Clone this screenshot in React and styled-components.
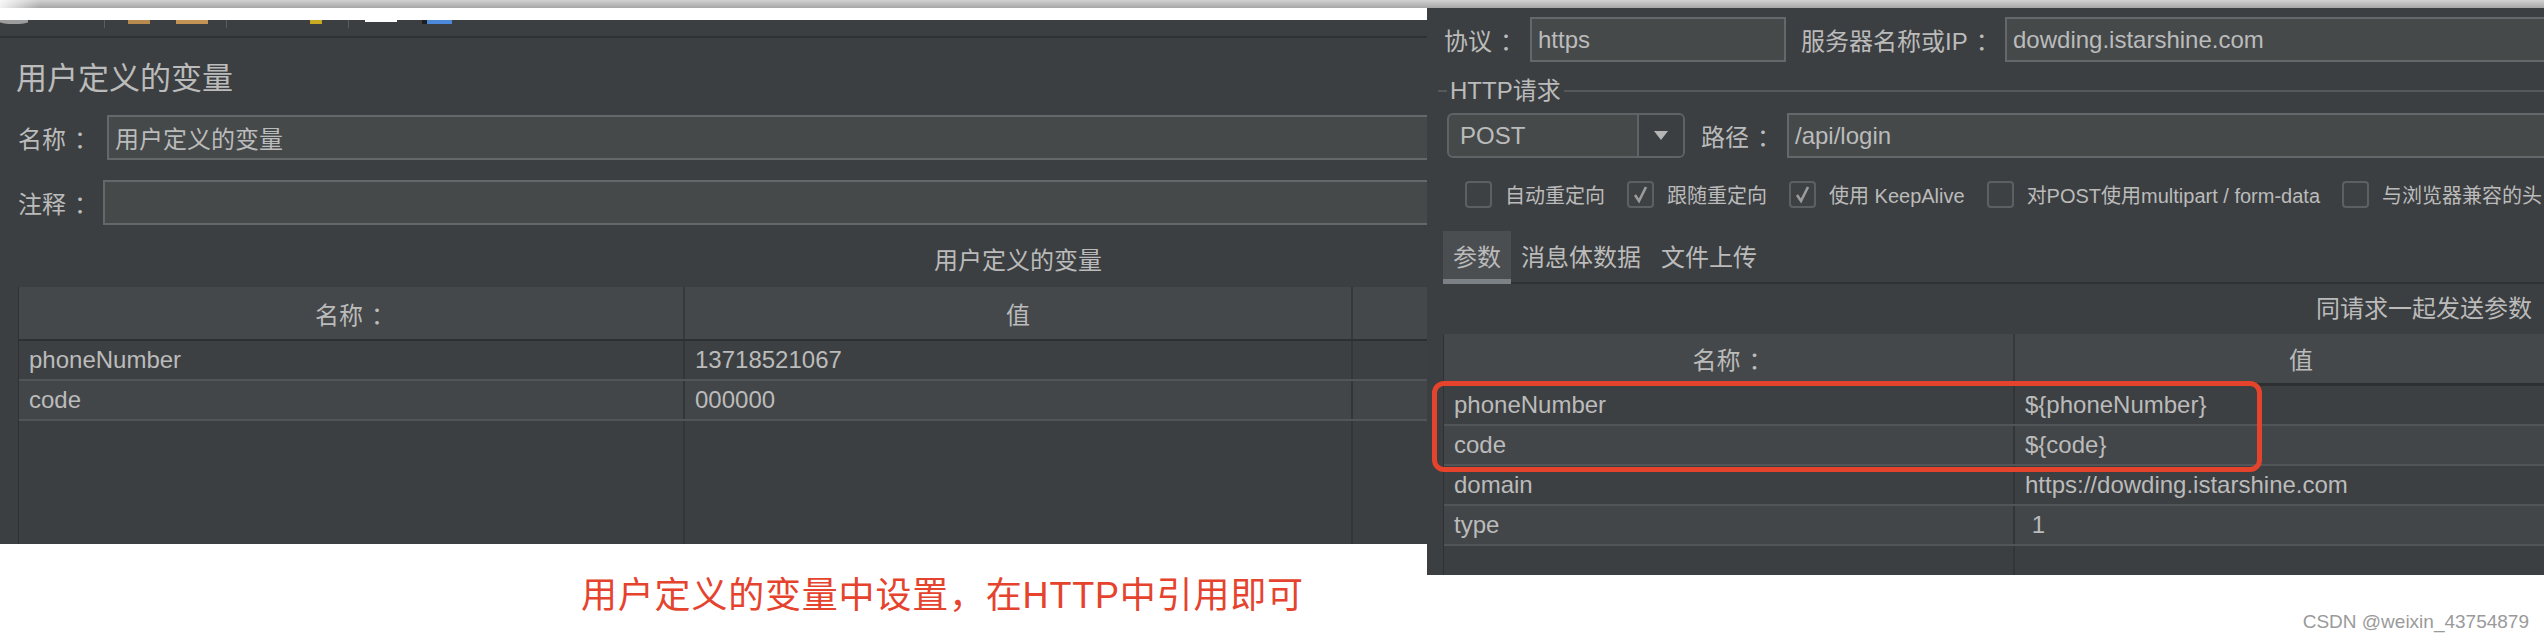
import styled, { createGlobalStyle } from "styled-components";

const GlobalStyle = createGlobalStyle`
  body {
    margin: 0;
    background: #fff;
    font-family: "Liberation Sans", "Noto Sans CJK SC", sans-serif;
  }
`;

const leftVars = [
  { name: "phoneNumber", value: "13718521067" },
  { name: "code", value: "000000" },
];

const params = [
  { name: "phoneNumber", value: "${phoneNumber}" },
  { name: "code", value: "${code}" },
  { name: "domain", value: "https://dowding.istarshine.com" },
  { name: "type", value: " 1" },
];

const options = [
  { label: "自动重定向", checked: false },
  { label: "跟随重定向", checked: true },
  { label: "使用 KeepAlive", checked: true },
  { label: "对POST使用multipart / form-data", checked: false },
  { label: "与浏览器兼容的头", checked: false },
];

const toolbarBits = [
  { w: 28, h: 4, c: "#9d9d9d", ml: 0, round: true },
  { w: 1, h: 8, c: "#5a5d5f", ml: 76 },
  { w: 22, h: 4, c: "#b98a4e", ml: 23 },
  { w: 32, h: 4, c: "#c39453", ml: 26 },
  { w: 1, h: 8, c: "#5a5d5f", ml: 18 },
  { w: 12, h: 4, c: "#c9a920", ml: 83 },
  { w: 1, h: 8, c: "#5a5d5f", ml: 26 },
  { w: 32, h: 2, c: "#ffffff", ml: 16 },
  { w: 5, h: 4, c: "#1e1e1e", ml: 25 },
  { w: 25, h: 4, c: "#4c89da", ml: 0 },
];

// label text followed by a centred full-width colon, as the Swing UI draws it
const WithColon = ({ children }) => (
  <>
    {children}
    <Colon>：</Colon>
  </>
);

function App() {
  return (
    <Page>
      <GlobalStyle />
      <TopShade />
      <Shots>
        <LeftCol>
          <WhiteStrip />
          <LeftShot>
            <Toolbar>
              {toolbarBits.map((b, i) => (
                <Bit key={i} $w={b.w} $h={b.h} $c={b.c} $ml={b.ml} $round={b.round} />
              ))}
            </Toolbar>
            <Sheet>
              <PanelTitle>用户定义的变量</PanelTitle>
              <FieldRow $mt={21}>
                <Label $w={89}><WithColon>名称</WithColon></Label>
                <Input>用户定义的变量</Input>
              </FieldRow>
              <FieldRow $mt={20}>
                <Label $w={85}><WithColon>注释</WithColon></Label>
                <Input />
              </FieldRow>
              <Caption>用户定义的变量</Caption>
              <Table $mt={13}>
                <HeadRow $cols="666px 668px 1fr" $h={52} $bb={2}>
                  <HeadCell><WithColon>名称</WithColon></HeadCell>
                  <HeadCell>值</HeadCell>
                  <HeadCell />
                </HeadRow>
                {leftVars.map((v, i) => (
                  <Row key={v.name} $cols="666px 668px 1fr" $alt={i % 2 === 1}>
                    <Cell>{v.name}</Cell>
                    <Cell>{v.value}</Cell>
                    <Cell />
                  </Row>
                ))}
                <Filler $cols="666px 668px 1fr">
                  <FillCell />
                  <FillCell />
                  <FillCell />
                </Filler>
              </Table>
            </Sheet>
          </LeftShot>
          <Note>用户定义的变量中设置，在HTTP中引用即可</Note>
        </LeftCol>

        <RightCol>
          <RightShot>
            <FieldRow $mt={9}>
              <Label $w={86}><WithColon>协议</WithColon></Label>
              <Input $w={256}>https</Input>
              <Label $w={204} $ml={15}><WithColon>服务器名称或IP</WithColon></Label>
              <Input $bleed>dowding.istarshine.com</Input>
            </FieldRow>
            <Legend>
              <LegendLine $w={9} />
              <LegendText>HTTP请求</LegendText>
              <LegendLine />
            </Legend>
            <FieldRow $mt={9}>
              <Combo>
                <ComboValue>POST</ComboValue>
                <ComboArrow>
                  <svg width="14" height="9" viewBox="0 0 14 9">
                    <path d="M0 0 L14 0 L7 9 Z" fill="#b5b5b5" />
                  </svg>
                </ComboArrow>
              </Combo>
              <Label $w={86} $ml={16}><WithColon>路径</WithColon></Label>
              <Input $bleed>/api/login</Input>
            </FieldRow>
            <OptionRow>
              {options.map((o) => (
                <OptionItem key={o.label}>
                  <CheckBox>
                    {o.checked && (
                      <svg width="23" height="23" viewBox="0 0 23 23">
                        <path d="M6 12 L10 18 L17 4" fill="none" stroke="#9b9b9b" strokeWidth="2.6" />
                      </svg>
                    )}
                  </CheckBox>
                  <OptionLabel>{o.label}</OptionLabel>
                </OptionItem>
              ))}
            </OptionRow>
            <TabStrip>
              <Tab $active>参数</Tab>
              <Tab>消息体数据</Tab>
              <Tab>文件上传</Tab>
            </TabStrip>
            <SendCaption>同请求一起发送参数</SendCaption>
            <Table $mt={12} $ml={-1} $w={1145}>
              <HeadRow $cols="571px 1fr" $h={49} $bb={3}>
                <HeadCell><WithColon>名称</WithColon></HeadCell>
                <HeadCell>值</HeadCell>
              </HeadRow>
              <Body>
                {params.map((p, i) => (
                  <Row key={p.name} $cols="571px 1fr" $alt={i % 2 === 1}>
                    <Cell>{p.name}</Cell>
                    <Cell>{p.value}</Cell>
                  </Row>
                ))}
                <RedMark />
              </Body>
              <Filler $cols="571px 1fr">
                <FillCell />
                <FillCell />
              </Filler>
            </Table>
          </RightShot>
          <Watermark>CSDN @weixin_43754879</Watermark>
        </RightCol>
      </Shots>
    </Page>
  );
}

export default App;

const Page = styled.div`
  width: 2544px;
  height: 642px;
  overflow: hidden;
  background: #fff;
`;

const TopShade = styled.div`
  height: 8px;
  background: linear-gradient(to right, rgba(255, 255, 255, 0.85), rgba(255, 255, 255, 0) 40px),
    linear-gradient(#d2d2d2, #a6a6a6);
`;

const Shots = styled.div`
  display: flex;
  align-items: flex-start;
`;

const LeftCol = styled.div`
  width: 1427px;
  flex: none;
  display: flex;
  flex-direction: column;
`;

const WhiteStrip = styled.div`
  height: 12px;
  background: #fff;
`;

const LeftShot = styled.div`
  height: 524px;
  background: #3c3f41;
  color: #bbbbbb;
  overflow: hidden;
  display: flex;
  flex-direction: column;
`;

const Toolbar = styled.div`
  height: 16px;
  flex: none;
  display: flex;
  align-items: flex-start;
  border-bottom: 2px solid #2f3133;
`;

const Bit = styled.span`
  flex: none;
  width: ${(p) => p.$w}px;
  height: ${(p) => p.$h}px;
  margin-left: ${(p) => p.$ml}px;
  background: ${(p) => p.$c};
  border-radius: ${(p) => (p.$round ? "0 0 50% 50%" : "0")};
`;

const Sheet = styled.div`
  width: 2036px;
  box-sizing: border-box;
  padding: 0 18px;
  flex: 1;
  min-height: 0;
  display: flex;
  flex-direction: column;
`;

const PanelTitle = styled.div`
  margin: 25px 0 0 -2px;
  font-size: 31px;
  line-height: 31px;
`;

const FieldRow = styled.div`
  display: flex;
  align-items: center;
  height: 45px;
  flex: none;
  margin-top: ${(p) => p.$mt}px;
  font-size: 24px;
  color: #bbbbbb;
`;

const Label = styled.div`
  flex: none;
  width: ${(p) => p.$w}px;
  margin-left: ${(p) => p.$ml || 0}px;
  white-space: nowrap;
`;

const Colon = styled.span`
  display: inline-block;
  margin-left: 8px;
  margin-right: -8px;
`;

const Input = styled.div`
  height: 45px;
  box-sizing: border-box;
  border: 2px solid #65686a;
  background: #45494a;
  display: flex;
  align-items: center;
  padding-left: 6px;
  white-space: nowrap;
  ${(p) => (p.$w ? `width: ${p.$w}px; flex: none;` : "flex: 1;")}
  margin-right: ${(p) => (p.$bleed ? "-20px" : "0")};
`;

const Caption = styled.div`
  margin-top: 23px;
  text-align: center;
  font-size: 24px;
  line-height: 26px;
`;

const Table = styled.div`
  margin-top: ${(p) => p.$mt}px;
  margin-left: ${(p) => p.$ml || 0}px;
  width: ${(p) => (p.$w ? `${p.$w}px` : "auto")};
  flex: 1;
  min-height: 0;
  display: flex;
  flex-direction: column;
  border-left: 1px solid #2f3133;
  color: #bbbbbb;
  font-size: 24px;
`;

const HeadRow = styled.div`
  display: grid;
  grid-template-columns: ${(p) => p.$cols};
  height: ${(p) => p.$h}px;
  flex: none;
  background: #45484a;
  border-bottom: ${(p) => p.$bb}px solid #2d2f31;
`;

const HeadCell = styled.div`
  display: flex;
  align-items: center;
  justify-content: center;
  border-right: 2px solid #36393b;
  overflow: hidden;
  white-space: nowrap;
`;

const Body = styled.div`
  position: relative;
  flex: none;
`;

const Row = styled.div`
  display: grid;
  grid-template-columns: ${(p) => p.$cols};
  height: 38px;
  background: ${(p) => (p.$alt ? "#434648" : "#3d4042")};
  border-bottom: 2px solid #525557;
`;

const Cell = styled.div`
  display: flex;
  align-items: center;
  padding-left: 10px;
  border-right: 2px solid #333537;
  white-space: pre;
  overflow: hidden;
`;

const Filler = styled.div`
  flex: 1;
  display: grid;
  grid-template-columns: ${(p) => p.$cols};
`;

const FillCell = styled.div`
  border-right: 2px solid #333537;
`;

const RedMark = styled.div`
  position: absolute;
  top: -5px;
  left: -12px;
  width: 830px;
  height: 91px;
  box-sizing: border-box;
  border: 5px solid #e5432b;
  border-radius: 12px;
  pointer-events: none;
`;

const Note = styled.div`
  margin-top: 34px;
  padding-left: 581px;
  font-size: 36px;
  line-height: 36px;
  letter-spacing: 0.8px;
  color: #e5432d;
  white-space: nowrap;
`;

const RightCol = styled.div`
  flex: 1;
  min-width: 0;
  display: flex;
  flex-direction: column;
`;

const RightShot = styled.div`
  height: 567px;
  box-sizing: border-box;
  padding-left: 17px;
  background: #3c3f41;
  color: #bbbbbb;
  overflow: hidden;
  display: flex;
  flex-direction: column;
`;

const Legend = styled.div`
  display: flex;
  align-items: center;
  margin: 16px 0 0 -6px;
  font-size: 24px;
  line-height: 26px;
`;

const LegendLine = styled.div`
  height: 2px;
  background: #56595b;
  ${(p) => (p.$w ? `width: ${p.$w}px; flex: none;` : "flex: 1;")}
`;

const LegendText = styled.span`
  padding: 0 3px;
  white-space: nowrap;
`;

const Combo = styled.div`
  flex: none;
  display: flex;
  width: 238px;
  height: 45px;
  box-sizing: border-box;
  margin-left: 3px;
  border: 2px solid #606365;
  border-radius: 6px;
  background: #45494a;
  overflow: hidden;
`;

const ComboValue = styled.div`
  width: 190px;
  box-sizing: border-box;
  padding-left: 11px;
  display: flex;
  align-items: center;
  border-right: 2px solid #606365;
`;

const ComboArrow = styled.div`
  flex: 1;
  background: #3c3f41;
  display: flex;
  align-items: center;
  justify-content: center;
`;

const OptionRow = styled.div`
  display: flex;
  align-items: center;
  gap: 22px;
  height: 27px;
  margin: 23px 0 0 21px;
  flex: none;
  white-space: nowrap;
`;

const OptionItem = styled.div`
  display: flex;
  align-items: center;
  gap: 13px;
  flex: none;
`;

const CheckBox = styled.div`
  width: 27px;
  height: 27px;
  box-sizing: border-box;
  border: 2px solid #5d6062;
  border-radius: 4px;
  background: #3e4143;
  display: flex;
  align-items: center;
  justify-content: center;
`;

const OptionLabel = styled.span`
  font-size: 20px;
`;

const TabStrip = styled.div`
  display: flex;
  height: 53px;
  flex: none;
  margin: 23px 0 0 -1px;
  box-shadow: inset 0 -2px 0 #2f3133;
  font-size: 24px;
`;

const Tab = styled.div`
  display: flex;
  align-items: center;
  padding: 0 10px;
  box-sizing: border-box;
  background: ${(p) => (p.$active ? "#4a4e51" : "transparent")};
  border-bottom: 5px solid ${(p) => (p.$active ? "#7c8186" : "transparent")};
  white-space: nowrap;
`;

const SendCaption = styled.div`
  margin-top: 12px;
  padding-right: 12px;
  text-align: right;
  font-size: 24px;
  line-height: 26px;
  flex: none;
`;

const Watermark = styled.div`
  margin-top: 36px;
  padding-right: 15px;
  text-align: right;
  font-size: 19px;
  color: #9a9a9a;
  white-space: nowrap;
`;
